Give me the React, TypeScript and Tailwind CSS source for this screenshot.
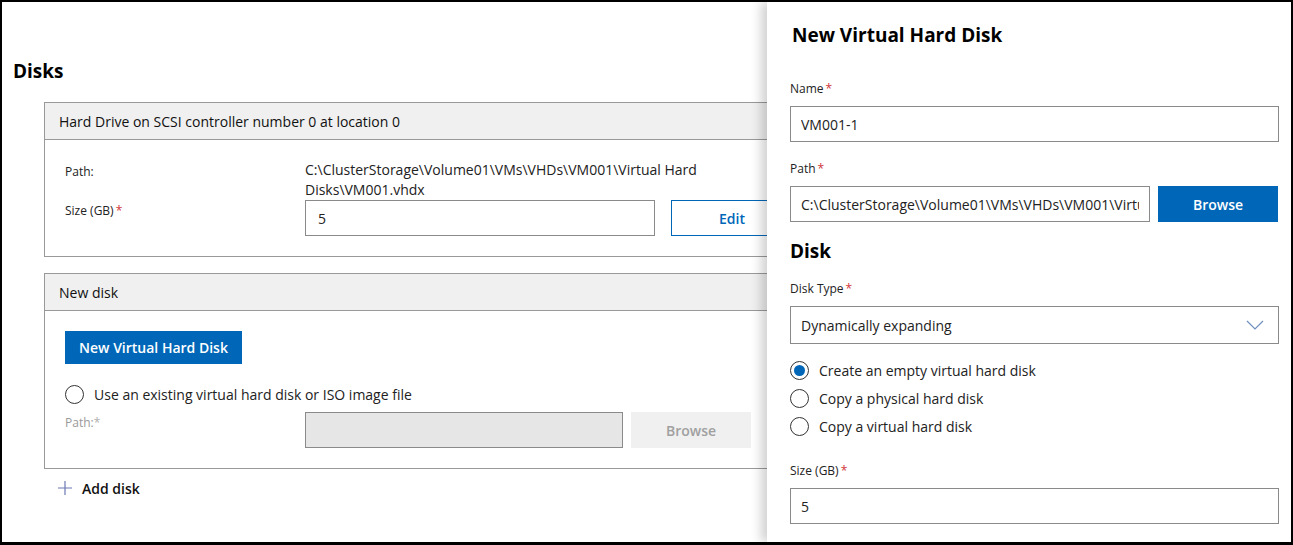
const font = "font-['Open_Sans',sans-serif]";

function Req() {
  return <span className="ml-[2px] text-[#d13438]">*</span>;
}

function Radio({ checked, label }: { checked?: boolean; label: string }) {
  return (
    <div className="flex h-[28px] items-center">
      <span className="flex h-[19px] w-[19px] items-center justify-center rounded-full border border-[#333]">
        {checked && <span className="h-[11px] w-[11px] rounded-full bg-[#0067b8]" />}
      </span>
      <span className="ml-[10px] text-[14px] text-[#222]">{label}</span>
    </div>
  );
}

function CardHeader({ title }: { title: string }) {
  return (
    <div className="flex h-[37px] items-center border-b border-[#999] bg-[#f0f0f0] pl-[14px] text-[14px] text-[#111]">
      {title}
    </div>
  );
}

function TextBox({ value, className = "" }: { value: string; className?: string }) {
  return (
    <input
      readOnly
      value={value}
      className={`h-[36px] border border-[#8a8a8a] bg-white px-[10px] text-[14px] text-[#222] outline-none ${className}`}
    />
  );
}

export default function App() {
  return (
    <div
      className={`relative h-[545px] w-[1293px] overflow-hidden border-2 border-b-[3px] border-black bg-white ${font}`}
    >
      {/* background form */}
      <div className="pl-[11px] pt-[55px]">
        <h2 className="h-[28px] text-[19px] font-bold leading-[28px] text-black">Disks</h2>
        <div className="ml-[31px] mt-[17px] w-[820px]">
          <div className="border border-[#999]">
            <CardHeader title="Hard Drive on SCSI controller number 0 at location 0" />
            <div className="px-[20px] pb-[20px] pt-[20px]">
              <div className="flex">
                <div className="w-[240px] pt-[2px] text-[12px] leading-5 text-[#222]">Path:</div>
                <div className="w-[420px] text-[14px] leading-5 text-[#222]">
                  C:\ClusterStorage\Volume01\VMs\VHDs\VM001\Virtual Hard Disks\VM001.vhdx
                </div>
              </div>
              <div className="flex">
                <div className="w-[240px] pt-[1px] text-[12px] leading-5 text-[#222]">
                  Size (GB)
                  <Req />
                </div>
                <TextBox value="5" className="w-[350px] px-[12px]" />
                <button className="ml-[16px] h-[36px] w-[122px] border border-[#0067b8] text-[14px] font-semibold text-[#0067b8]">
                  Edit
                </button>
              </div>
            </div>
          </div>

          <div className="mt-[16px] border border-[#999]">
            <CardHeader title="New disk" />
            <div className="px-[20px] pb-[20px] pt-[20px]">
              <button className="h-[33px] w-[177px] bg-[#0067b8] text-[14px] font-semibold text-white">
                New Virtual Hard Disk
              </button>
              <div className="mt-[16px]">
                <Radio label="Use an existing virtual hard disk or ISO image file" />
              </div>
              <div className="mt-[4px] flex">
                <div className="w-[240px] pt-[1px] text-[12px] leading-5 text-[#9a9a9a]">
                  Path:<span className="text-[#b0b0b0]">*</span>
                </div>
                <div className="h-[36px] w-[318px] border border-[#8a8a8a] bg-[#e6e6e6]" />
                <button className="ml-[8px] h-[36px] w-[120px] bg-[#f0f0f0] text-[14px] font-semibold text-[#a0a0a0]">
                  Browse
                </button>
              </div>
            </div>
          </div>

          <div className="mt-[8px] flex h-[22px] items-center pl-[13px]">
            <svg width="16" height="16" viewBox="0 0 16 16" className="text-[#6b78b4]">
              <path d="M8 1v14M1 8h14" stroke="currentColor" strokeWidth="1.2" fill="none" />
            </svg>
            <span className="ml-[9px] text-[14px] font-semibold text-[#111]">Add disk</span>
          </div>
        </div>
      </div>

      {/* side panel */}
      <div className="absolute bottom-0 left-[765px] right-0 top-0 flex flex-col bg-white pl-[23px] pr-[12px] shadow-[-6px_0_10px_rgba(0,0,0,0.18)]">
        <h2 className="ml-[2px] mt-[19px] h-[28px] text-[19px] font-bold leading-[28px] text-black">
          New Virtual Hard Disk
        </h2>
        <div className="mt-[32px] text-[12px] leading-4 text-[#222]">
          Name
          <Req />
        </div>
        <TextBox value="VM001-1" className="mt-[9px] w-full" />
        <div className="mt-[19px] text-[12px] leading-4 text-[#222]">
          Path
          <Req />
        </div>
        <div className="mt-[9px] flex">
          <TextBox
            value="C:\ClusterStorage\Volume01\VMs\VHDs\VM001\Virtual Hard Disks"
            className="w-[360px]"
          />
          <button className="ml-[8px] h-[36px] w-[120px] bg-[#0067b8] text-[14px] font-semibold text-white">
            Browse
          </button>
        </div>
        <h3 className="mt-[17px] h-[24px] text-[19px] font-bold leading-[24px] text-black">Disk</h3>
        <div className="mt-[18px] text-[12px] leading-4 text-[#222]">
          Disk Type
          <Req />
        </div>
        <div className="mt-[9px] flex h-[38px] items-center justify-between border border-[#8a8a8a] pl-[10px] pr-[14px] text-[14px] text-[#222]">
          <span>Dynamically expanding</span>
          <svg width="18" height="10" viewBox="0 0 18 10">
            <path d="M1 1l8 8 8-8" stroke="#6f8fc0" strokeWidth="1.2" fill="none" />
          </svg>
        </div>
        <div className="mt-[12px]">
          <Radio checked label="Create an empty virtual hard disk" />
          <Radio label="Copy a physical hard disk" />
          <Radio label="Copy a virtual hard disk" />
        </div>
        <div className="mt-[23px] text-[12px] leading-4 text-[#222]">
          Size (GB)
          <Req />
        </div>
        <TextBox value="5" className="mt-[9px] w-full" />
      </div>
    </div>
  );
}
